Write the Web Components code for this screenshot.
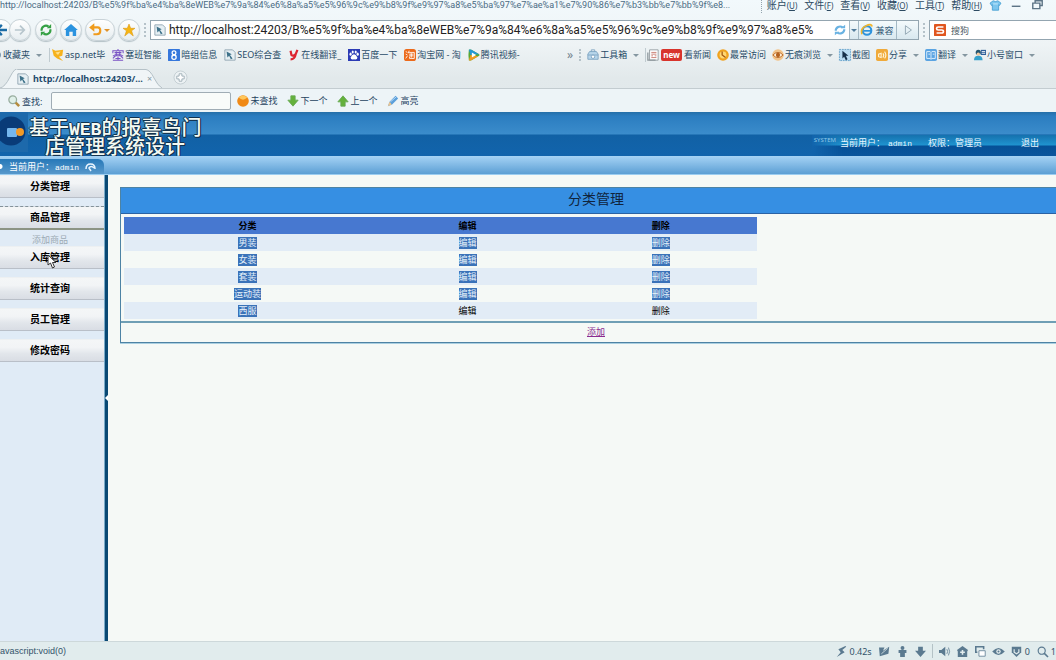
<!DOCTYPE html>
<html lang="zh-CN">
<head>
<meta charset="utf-8">
<title>分类管理</title>
<style>
html,body{margin:0;height:100%}
body{overflow:hidden;font-family:"Noto Sans","Noto Sans CJK SC",sans-serif;font-size:9px;color:#294c68;background:#f5f9f6}
</style>
</head>
<body>
<browser-window></browser-window>
<script>
const define = (name, html, setup) => customElements.define(name, class extends HTMLElement {
  connectedCallback() {
    if (this.shadowRoot) return;
    const t = document.createElement('template');
    t.innerHTML = html;
    this.attachShadow({mode: 'open'}).append(t.content.cloneNode(true));
    if (setup) setup(this, this.shadowRoot);
  }
});

const ICONS = {
  page: '<path d="M1 1h9l3 3v9H1z" fill="#e6eff3" stroke="#8ba1ad"/><path d="M3 3l6 3-2 1 3 4-2 1-2-4-2 2z" fill="#3d7189"/>',
  fav: '<circle cx="7" cy="7" r="5" fill="#e4edf3" stroke="#6d8ca5" stroke-width="1.4"/><path d="M7 4v4h3" fill="none" stroke="#6d8ca5"/>',
  asp: '<path d="M0 0l4 2 9-1-1 7-4 1 5 5-7-3-4-3z" fill="#f6b21d"/><path d="M4 4l6-1-3 4z" fill="#ffe08a"/>',
  sai: '<path d="M7 0v2M1 5V2h12v3M3 4h8M3 6h8M5 3v5M9 3v5M1 8h12M4 8l-3 3M10 8l3 3M7 9v4M4 11h6M1 13.200h12" fill="none" stroke="#7952c4" stroke-width="1.200"/>',
  eight: '<rect width="14" height="14" rx="1" fill="#3577dc"/><circle cx="7" cy="4.500" r="2.200" fill="none" stroke="#fff" stroke-width="1.500"/><circle cx="7" cy="9.500" r="2.500" fill="none" stroke="#fff" stroke-width="1.500"/>',
  yred: '<path d="M3 2l1 5q2 2 5-1l2-5M9 6q-1 6-6 6" fill="none" stroke="#dd2430" stroke-width="2.600"/>',
  paw: '<rect width="14" height="14" fill="#2b3bb5"/><g fill="#fff"><ellipse cx="3" cy="6" rx="1.300" ry="1.800"/><ellipse cx="5.500" cy="3.500" rx="1.200" ry="1.800"/><ellipse cx="9" cy="3.500" rx="1.200" ry="1.800"/><ellipse cx="11.300" cy="6" rx="1.300" ry="1.800"/><path d="M7 6q2 0 4 4 0 3-4 2-4 1-4-2 2-4 4-4z"/></g>',
  tao: '<rect width="14" height="14" rx="3" fill="#ec6a1b"/><path d="M2 3l2 1M2 6l2 1M2 11l2-3M6 2L5 5M6 4h6v7h-2M6 6h5M6 8h5M8.500 5v5M6.500 9v2h4" fill="none" stroke="#fff"/>',
  play: '<path d="M1 1q1-1 3 0l9 5q1 1 0 2l-9 5q-2 1-3 0-1-6 0-12z" fill="#58a832"/><path d="M1 1q1-1 3 0l9 5-10 1z" fill="#2498d4"/><path d="M12 8.500l-8 4.500q-2 1-3 0l2-6z" fill="#f19a20"/><path d="M4.500 4l5 3-5 3z" fill="#fff"/>',
  box: '<path d="M1 6l2-3h8l2 3v6H1z" fill="#b7d5ea" stroke="#7aa2c0"/><path d="M5 3V1h4v2M1 7h12" fill="none" stroke="#7aa2c0"/><circle cx="7" cy="9" r="2" fill="#fff" stroke="#7aa2c0"/>',
  news: '<path d="M3 1h10v12H3z" fill="#fff" stroke="#8d979c"/><path d="M1 4v9h9" fill="none" stroke="#8d979c" stroke-width="1.500"/><path d="M5 4h6M5 6h6M5 8h2M9 8h2M5 10h6" stroke="#c47467"/>',
  clock: '<circle cx="7" cy="7" r="6.800" fill="#f0a21f"/><circle cx="7" cy="7" r="4" fill="#ffd773"/><path d="M6 3v4l4 3" fill="none" stroke="#a65910" stroke-width="1.500"/>',
  eyeo: '<circle cx="7" cy="7" r="6.800" fill="#f2c389"/><path d="M1 7q6-6 12 0-6 6-12 0z" fill="#fff2dc" stroke="#b5611e"/><circle cx="7" cy="7" r="2.500" fill="#b5611e"/>',
  shot: '<rect x=".5" y=".5" width="13" height="13" fill="#b9dcf2" stroke="#5f9dc8" stroke-dasharray="2 1"/><path d="M4 2v9l2-2 2 4 2-1-2-4h3z" fill="#16304a"/>',
  share: '<rect width="14" height="14" rx="2" fill="#f0aa3a"/><path d="M3 6v3l3 1V5zM8 5q2 2 0 5M10 3q3 4 0 8" fill="none" stroke="#fff3d5" stroke-width="1.300"/>',
  book: '<rect width="14" height="14" rx="2" fill="#5ba4e2"/><path d="M2 3h4l1 1 1-1h4v8H8l-1 1-1-1H2zM7 4v8M4 6h2M9 6h2" fill="none" stroke="#eaf6ff"/>',
  duo: '<circle cx="5" cy="4" r="3" fill="#24566f"/><circle cx="5" cy="6" r="2" fill="#f2c9a0"/><path d="M0 13q0-5 5-5t5 5z" fill="#36a1cb"/><rect x="8" y="1" width="6" height="6" fill="#2d5e98"/><path d="M9 3h4M9 5h4" stroke="#fff"/>',
  find: '<circle cx="5.500" cy="5.500" r="4.500" fill="#dff0e9" stroke="#98ad9f" stroke-width="1.500"/><path d="M9 9l4 4" stroke="#b58b3c" stroke-width="3"/>',
  ball: '<circle cx="7" cy="7" r="6.800" fill="#f08a17"/><path d="M2 3q5 5 10 0Q7-2 2 3z" fill="#ffc75b"/>',
  down: '<path d="M4.500 1h5v5H13l-6 7-6-7h3.500z" fill="#64b13b" stroke="#67a852"/>',
  up: '<path d="M4.500 13h5V8H13L7 1 1 8h3.500z" fill="#64b13b" stroke="#67a852"/>',
  pen: '<path d="M1 13l2-5 7-7 3 3-7 7z" fill="#5b9fda"/><path d="M1 13l2-5 2.500 3z" fill="#f0c48a"/><path d="M4 8l7-6" stroke="#c1e1fa"/>',
  shirt: '<path d="M4 1q3 2 6 0l4 3-2 3-1-1v7H3V6L2 7 0 4z" fill="#7cc6ee" stroke="#3d99cf"/><path d="M4 5h6" stroke="#d5f0ff"/>',
  min: '<path d="M1 8h11" stroke="#5d7486" stroke-width="1.800"/>',
  restore: '<path d="M4 4V1h9v6h-3M1 4h9v7H1z" fill="none" stroke="#5d7486" stroke-width="1.800"/>',
  back: '<path d="M14 7H2M8 1L2 7l6 6" fill="none" stroke="#1b6ba5" stroke-width="2.800"/>',
  fwd: '<path d="M1 7h11M7 2l5 5-5 5" fill="none" stroke="#b8c6cd" stroke-width="2"/>',
  reload: '<path d="M2 8a5 5 0 0 1 8-5M12 6a5 5 0 0 1-8 5" fill="none" stroke="#35a044" stroke-width="2.500"/><path d="M8 5h5V0zM6 9H1v5z" fill="#35a044"/>',
  home: '<path d="M7 0l8 7h-2v7H9V9H5v5H1V7h-2z" fill="#2b93df"/>',
  undo: '<path d="M3 4h6q3 0 3 4t-4 4H4" fill="none" stroke="#f09b1c" stroke-width="2.500"/><path d="M5-1v10L-1 4z" fill="#f09b1c"/>',
  star: '<path d="M7 0l2 5h5l-4 3 2 6-5-4-5 4 2-6-4-3h5z" fill="#f6b512" stroke="#d8930e" stroke-width=".6"/>',
  refresh: '<path d="M2 8a5 5 0 0 1 8-4M12 6a5 5 0 0 1-8 4" fill="none" stroke="#69b2e2" stroke-width="2.500"/><path d="M8 5h5V1zM6 9H1v4z" fill="#69b2e2"/>',
  ie: '<circle cx="7" cy="7.500" r="5" fill="none" stroke="#2e93dc" stroke-width="2.500"/><path d="M3 8h9" stroke="#2e93dc" stroke-width="2"/><path d="M1 12Q-1 5 6 2q6-3 7 1" fill="none" stroke="#f0b52c" stroke-width="2"/>',
  run: '<path d="M4 2l7 5-7 5z" fill="none" stroke="#8ba0ad"/>',
  sogou: '<rect width="14" height="14" rx="1" fill="#e0561f"/><path d="M11 3.500H5q-2 0-2 1.700T5 7h4q2 0 2 1.800t-2 1.700H3" fill="none" stroke="#fff" stroke-width="2"/>',
  plus: '<circle cx="7" cy="7" r="7" fill="#edf2f4" stroke="#c3cdd2"/><path d="M5.500 3h3v2.500H11v3H8.500V11h-3V8.500H3v-3h2.500z" fill="#fff" stroke="#9eadb5"/>',
  bolt: '<path d="M12 0L3 4l3 4-5 6 10-6-3-3 5-4z" fill="#5b7a90"/>',
  leaf: '<path d="M0 2h7L5 6l8-5-1 9-11 3z" fill="#5b7a90"/><path d="M3 10l8-7" stroke="#dfeaeb"/>',
  man: '<circle cx="7" cy="2.500" r="2.500" fill="#5b7a90"/><path d="M2 5h10v4h-2v5H4V9H2z" fill="#5b7a90"/>',
  darr: '<path d="M4 1h6v5h4l-7 8-7-8h4z" fill="#5b7a90"/>',
  sound: '<path d="M0 5h3l5-4v12L3 9H0z" fill="#5b7a90"/><path d="M10 4q2 3 0 6M12 2q3 5 0 10" fill="none" stroke="#5b7a90"/>',
  house: '<path d="M7 0l7 5-1 2v7H1V7L0 5z" fill="#5b7a90"/><path d="M6 5h2v2h2v2H8v2H6V9H4V7h2z" fill="#e4edee"/>',
  wins: '<path d="M3 8H1V1h10v3" fill="none" stroke="#5b7a90" stroke-width="2"/><path d="M5 6h8v7H5z" fill="#fff" stroke="#5b7a90"/>',
  eye: '<path d="M-1 7q8-9 16 0-8 9-16 0z" fill="#5b7a90"/><circle cx="7" cy="7" r="2.800" fill="#e4edee"/><circle cx="7" cy="7" r="1.300" fill="#5b7a90"/>',
  shield: '<path d="M1 1h12v7l-6 6-6-6z" fill="#5b7a90"/><path d="M4 4v4l3 2 3-2V4" fill="none" stroke="#e4edee" stroke-width="1.500"/>',
  zoom: '<circle cx="6" cy="6" r="4.500" fill="none" stroke="#5b7a90" stroke-width="1.500"/><path d="M9 9l5 5" stroke="#5b7a90" stroke-width="2"/>'
};

define('ui-icon', `<style>:host{display:block;flex:none;width:12px;height:12px}svg{display:block;width:100%;height:100%;overflow:visible}</style><svg viewBox="0 0 14 14" aria-hidden="true"></svg>`,
  (el, root) => { root.querySelector('svg').innerHTML = ICONS[el.getAttribute('name')] || ''; });

define('tool-link', `<style>
:host{display:block;flex:none}
button{display:flex;align-items:center;gap:1px;height:16px;margin:0;padding:0;border:0;background:none;font:inherit;line-height:16px;color:inherit;white-space:nowrap}
.caret{display:none;margin-left:5px;border:3px solid transparent;border-top-color:#8496a0;border-bottom:0}
:host([menu]) .caret{display:block}
</style><button type="button"><ui-icon></ui-icon><slot name="badge"></slot><span><slot></slot></span><i class="caret"></i></button>`,
  (el, root) => {
    const icon = document.createElement('ui-icon');
    icon.setAttribute('name', el.getAttribute('icon'));
    root.querySelector('ui-icon').replaceWith(icon);
  });

define('round-button', `<style>
:host{display:block;flex:none}
button{display:flex;align-items:center;justify-content:center;gap:2px;width:22px;height:22px;padding:0;border:1px solid #c9d3d8;border-radius:11px;background:linear-gradient(#fff,#e6edf0);box-shadow:0 1px 1px #b3c0c6}
:host([wide]) button{width:30px}
.caret{display:none;border:3px solid transparent;border-top-color:#e0932a;border-bottom:0}
:host([wide]) .caret{display:block}
</style><button type="button"><slot></slot><i class="caret"></i></button>`,
  (el, root) => root.querySelector('button').setAttribute('aria-label', el.getAttribute('label')));

define('title-bar', `<style>
:host{display:flex;align-items:center;height:14px;margin-top:-2px;margin-bottom:-1px}
.title{white-space:nowrap;line-height:14px;font-family:Roboto,sans-serif;color:#4a6b83}
nav{display:flex;align-items:center;gap:7px;margin-left:auto;border-left:1px dotted #93a4ae;padding-left:5px;font-size:10px}
nav button{padding:0;border:0;background:none;font:inherit;line-height:14px;color:#2c4a62;white-space:nowrap}
nav small{font-size:8px}
.win{display:flex;gap:10px;padding:0 13px 0 8px}
.win ui-icon{width:11px;height:11px}
</style>
<span class="title">http://localhost:24203/B%e5%9f%ba%e4%ba%8eWEB%e7%9a%84%e6%8a%a5%e5%96%9c%e9%b8%9f%e9%97%a8%e5%ba%97%e7%ae%a1%e7%90%86%e7%b3%bb%e7%bb%9f%e8...</span>
<nav><button>账户<small>(<u>U</u>)</small></button><button>文件<small>(<u>F</u>)</small></button><button>查看<small>(<u>V</u>)</small></button><button>收藏<small>(<u>O</u>)</small></button><button>工具<small>(<u>T</u>)</small></button><button>帮助<small>(<u>H</u>)</small></button></nav>
<div class="win"><ui-icon name="shirt"></ui-icon><ui-icon name="min"></ui-icon><ui-icon name="restore"></ui-icon></div>`);

define('address-bar', `<style>
:host{display:flex;align-items:center;gap:4px;box-sizing:border-box;height:34px;padding-top:4px}
.nav{display:flex;align-items:center;gap:3px;margin-left:-10px}
.pair{display:flex;margin-right:1px}
.pair round-button+round-button{margin-left:-3px}
.url{flex:1 1 auto;min-width:0}
.field{display:flex;align-items:center;box-sizing:border-box;height:20px;border:1px solid #93a5b0;background:#fff}
input{flex:1;min-width:0;padding:0;border:0;outline:0;background:none;font:inherit;color:#222}
.url input{font-size:12px;font-family:Roboto,sans-serif}
.url>ui-icon{margin:0 3px}
.drop,.mode,.go{display:flex;align-items:center;justify-content:center;height:18px;padding:0;border:0;border-left:1px solid #a3b9c5;background:linear-gradient(#f4fafc,#d9e8ef);color:#345a77;font:inherit}
.drop{width:9px}.drop i{border:3px solid transparent;border-top-color:#527c9b;border-bottom:0}
.mode{width:38px;gap:2px}.go{width:22px}
.search{flex:0 0 127px;min-width:0;padding-left:4px;gap:5px;border-right:0}
.search input{color:#4c5a64}
.dots{height:14px;border-left:2px dotted #b5c2c9}
</style>
<div class="nav"><div class="pair"><round-button label="后退"><ui-icon name="back"></ui-icon></round-button><round-button label="前进"><ui-icon name="fwd"></ui-icon></round-button></div>
<round-button label="刷新"><ui-icon name="reload"></ui-icon></round-button><round-button label="主页"><ui-icon name="home"></ui-icon></round-button><round-button label="恢复" wide><ui-icon name="undo"></ui-icon></round-button><round-button label="收藏"><ui-icon name="star"></ui-icon></round-button></div>
<i class="dots"></i>
<div class="field url"><ui-icon name="page"></ui-icon><input aria-label="地址" value="http://localhost:24203/B%e5%9f%ba%e4%ba%8eWEB%e7%9a%84%e6%8a%a5%e5%96%9c%e9%b8%9f%e9%97%a8%e5%"><ui-icon name="refresh"></ui-icon><button class="drop" aria-label="历史"><i></i></button><button class="mode"><ui-icon name="ie"></ui-icon>兼容</button><button class="go" aria-label="转到"><ui-icon name="run"></ui-icon></button></div>
<i class="dots"></i>
<div class="field search"><ui-icon name="sogou"></ui-icon><input aria-label="搜索" value="搜狗"></div>`);

define('bookmark-bar', `<style>
:host{display:flex;align-items:center;justify-content:space-between;height:20px;padding-right:21px}
div{display:flex;align-items:center;gap:6px}
.left{gap:7px;margin-left:-10px}
.sep{height:14px;border-left:1px solid #c0cbd0;margin-right:-5px}
.more{font-size:12px;line-height:16px;color:#71828d}
.dots{height:12px;border-left:2px dotted #b5c2c9}
.new{padding:0 2px;border-radius:2px;background:#d8342c;color:#fff;font-weight:bold;font-size:8px;line-height:12px;margin:0 1px}
</style>
<div class="left"><tool-link icon="fav" menu>收藏夹</tool-link><i class="sep"></i>
<tool-link icon="asp">asp.net毕</tool-link><tool-link icon="sai">塞班智能</tool-link><tool-link icon="eight">暗组信息</tool-link><tool-link icon="page">SEO综合查</tool-link><tool-link icon="yred">在线翻译_</tool-link><tool-link icon="paw">百度一下</tool-link><tool-link icon="tao">淘宝网 - 淘</tool-link><tool-link icon="play">腾讯视频-</tool-link></div>
<div><span class="more">»</span><i class="dots"></i>
<tool-link icon="box" menu>工具箱</tool-link><i class="sep"></i><tool-link icon="news"><span slot="badge" class="new">new</span>看新闻</tool-link><tool-link icon="clock">最常访问</tool-link><tool-link icon="eyeo" menu>无痕浏览</tool-link><tool-link icon="shot">截图</tool-link><tool-link icon="share" menu>分享</tool-link><tool-link icon="book" menu>翻译</tool-link><tool-link icon="duo" menu>小号窗口</tool-link></div>`);

define('tab-strip', `<style>
:host{display:flex;align-items:flex-end;gap:12px;height:23px;border-bottom:1px solid #c3ccd0}
.tab{position:relative;display:flex;align-items:center;gap:4px;height:19px;padding:0 8px 0 17px;width:137px;color:#1e4a6c}
.tab svg{position:absolute;inset:0;width:100%;height:100%}
.tab>:not(svg){position:relative}
b{font-size:9px;line-height:19px;white-space:nowrap}
button{padding:0;border:0;background:none;font:inherit;color:#8798a3}
.plus{padding-bottom:4px}
.plus ui-icon{width:13px;height:13px}
</style>
<div class="tab"><svg viewBox="0 0 162 19" preserveAspectRatio="none" aria-hidden="true"><path d="M0 19Q5 18 10 8T18 .5H146Q150 1 154 9T162 19" fill="#f0f5f7" stroke="#b5c1c7"/></svg><ui-icon name="page"></ui-icon><b>http://localhost:24203/...</b><button aria-label="关闭">×</button></div>
<button class="plus" aria-label="新标签"><ui-icon name="plus"></ui-icon></button>`);

define('find-bar', `<style>
:host{display:flex;align-items:center;gap:10px;box-sizing:border-box;height:23px;padding:1px 0 0 8px;background:#edf4f7;color:#1d425f}
label{display:flex;align-items:center;gap:2px;margin-right:-1px}
input{box-sizing:border-box;width:180px;height:18px;border:1px solid #a0adb5;border-radius:2px;background:#f9fcfa}
.gap{margin-left:-4px}
</style>
<label for="q"><ui-icon name="find"></ui-icon>查找:</label><input id="q"><tool-link class="gap" icon="ball">未查找</tool-link><tool-link icon="down">下一个</tool-link><tool-link icon="up">上一个</tool-link><tool-link icon="pen">高亮</tool-link>`);

define('app-header', `<style>
:host{display:flex;justify-content:space-between;height:44px;background:linear-gradient(#256fa8 0,#2b7dc0 4px,#3b8ccb 22px,#1161a5 23px,#1264ac 100%);color:#eaf7ff;overflow:hidden}
.brand{display:flex;align-items:center}
svg{width:28px;height:44px}
h1{margin:0;font-size:20px;line-height:19px;font-weight:500;color:#f4faf3;text-shadow:1px 0 #12324e,-1px 0 #12324e,0 1px #12324e,0 -1px #12324e,1px 1px #12324e;padding:5px 0 0 1px}
h1 span{display:block;height:19px}h1 span+span{padding-left:16px}
h1 em{font-style:normal;font-weight:bold;font-size:18px;line-height:16px;font-family:"Liberation Mono",monospace}
.info{display:flex;align-items:center;align-self:flex-end;box-sizing:border-box;height:21px;padding:0 17px 6px 2px;background:linear-gradient(90deg,#1264ac 0,transparent 30px),linear-gradient(#1571ae 0,#1f93cf 10px,#055097 11px,#0a559c 100%)}
small{font-size:6px;align-self:flex-start;color:#8ec7e8;line-height:10px;margin-right:4px}
.role{margin-left:16px}a{margin-left:39px;color:inherit;text-decoration:none}
code{font-size:8px;font-family:"Liberation Mono",monospace;margin-left:3px}
.info span{white-space:nowrap}
</style>
<div class="brand"><svg viewBox="0 0 28 44" aria-hidden="true"><path d="M0 0h28v40H0z" fill="#1d69ab"/><circle cx="11" cy="19" r="14.500" fill="#093b78"/><rect x="7" y="16" width="10" height="9" rx="1" fill="#75b6ed"/><circle cx="20" cy="20" r="4" fill="#f39a26"/></svg>
<h1><span>基于<em>WEB</em>的报喜鸟门</span><span>店管理系统设计</span></h1></div>
<div class="info"><small>SYSTEM</small><span>当前用户：<code>admin</code></span><span class="role">权限：管理员</span><a href="#">退出</a></div>`);

define('user-band', `<style>
:host{display:flow-root;height:19px;background:linear-gradient(#a6d3f5,#5c9fd4);border-bottom:1px solid #9bcdf0;box-sizing:border-box}
div{display:flex;align-items:center;box-sizing:border-box;width:104px;height:15px;margin-top:3px;padding-left:9px;border-radius:0 6px 0 0;background:radial-gradient(circle at 0 50%,#fff 2px,transparent 3px),linear-gradient(#2678b8,#5798cb);color:#fff;line-height:15px}
code{font-size:8px;font-family:"Liberation Mono",monospace;margin-left:1px}
svg{width:11px;height:10px;margin-left:6px}
</style><div><span>当前用户：<code>admin</code></span><svg viewBox="0 0 11 10" aria-hidden="true"><path d="M1 7q0-5 4.500-5T10 7M6 9l-2-3q2-3 5 0" fill="none" stroke="#e9f5ff" stroke-width="1.500"/></svg></div>`);

define('menu-item', `<style>
:host{display:block;margin-bottom:8px}
:host([active]){margin-bottom:0}
button{display:block;box-sizing:border-box;width:100%;height:23px;padding:0 4px 3px 0;border:0;border-bottom:1px solid #b9bfc8;border-top:1px solid #edf0f2;background:linear-gradient(#f4f6f7 0,#f2f4f6 35%,#e2e6eb 65%,#d9dde4 100%);font:bold 10px "Noto Sans CJK SC",sans-serif;line-height:17px;color:#000}
:host([active]) button{height:24px;border-top:1px dashed #83929a;border-bottom:2px solid #8c9484}
</style><button type="button"><slot></slot></button>`);

define('side-menu', `<style>
:host{display:block;flex:none;box-sizing:border-box;width:108px;background:#e0ebf6;border-right:3px solid #0a4974;box-shadow:inset -1px 0 #7aabc9;padding-right:1px;position:relative}
a{display:block;height:16px;padding-right:4px;text-align:center;font-size:9px;line-height:20px;color:#9caab4;text-decoration:none}
.cursor{position:absolute;left:47px;top:79px;width:10px;height:15px}
.grip{position:absolute;right:-3px;top:220px;border:3px solid transparent;border-right-color:#fff;border-left:0}
</style><menu-item>分类管理</menu-item><menu-item active>商品管理</menu-item><a href="#">添加商品</a><menu-item>入库管理</menu-item><menu-item>统计查询</menu-item><menu-item>员工管理</menu-item><menu-item>修改密码</menu-item>
<svg class="cursor" viewBox="0 0 10 15" aria-hidden="true"><path d="M1 1v10l2.500-2 2 5 2-1-2-4.500h3.500z" fill="#fff" stroke="#333"/></svg><i class="grip"></i>`);

define('category-panel', `<style>
:host{display:block;margin:12px -16px 0 12px;border:1px solid #4d83a4;box-shadow:0 1px #a9cfe0}
h2{margin:0;height:26px;box-sizing:border-box;border-bottom:1px solid #2a62a4;background:#368fe3;font-weight:400;font-size:14px;line-height:22px;text-align:center;color:#10243c}
table{width:calc(200% / 3);margin:3px 3px 2px;border-collapse:collapse;table-layout:fixed;text-align:center;color:#000}
th,td{height:17px;padding:0;line-height:16px;font-size:9px}
th{background:#4778d0}
th:first-child{width:39%}
tr:nth-child(odd) td{background:#e2ecf6}
mark{display:inline-block;height:12px;line-height:12px;vertical-align:middle;background:#3a72b8;color:#e6f1fb}
footer{height:19px;border-top:2px solid #6f9fb5;text-align:center;line-height:18px}
footer a{color:#8a2b90}
</style><h2>分类管理</h2><table><thead><tr><th>分类</th><th>编辑</th><th>删除</th></tr></thead><tbody></tbody></table><footer><a href="#">添加</a></footer>`,
  (el, root) => {
    root.querySelector('tbody').innerHTML = [['男装',1],['女装',1],['套装',1],['运动装',1],['西服',0]]
      .map(([n, sel]) => `<tr><td><mark>${n}</mark></td>` + ['编辑', '删除'].map(t => `<td>${sel ? `<mark>${t}</mark>` : t}</td>`).join('') + '</tr>').join('');
  });

define('status-bar', `<style>
:host{display:flex;align-items:center;flex:none;gap:7px;height:18px;border-top:1px solid #cdd8da;background:#e1eced;color:#33536a;overflow:hidden}
.msg{margin-right:auto;font-family:"Liberation Sans",sans-serif}
.i{display:flex;align-items:center;gap:3px}
ui-icon{width:11px;height:11px}
.sep{height:14px;border-left:1px solid #b4c2c6;margin:0 -1px}
</style><span class="msg">avascript:void(0)</span><span class="i"><ui-icon name="bolt"></ui-icon>0.42s</span><ui-icon name="leaf"></ui-icon><ui-icon name="man"></ui-icon><ui-icon name="darr"></ui-icon><i class="sep"></i><ui-icon name="sound"></ui-icon><ui-icon name="house"></ui-icon><ui-icon name="wins"></ui-icon><ui-icon name="eye"></ui-icon><span class="i"><ui-icon name="shield"></ui-icon>0</span><span class="i"><ui-icon name="zoom"></ui-icon>1</span>`);

define('browser-window', `<style>
:host{display:flex;flex-direction:column;height:100vh;overflow:hidden}
.chrome{flex:none;display:flow-root;background:linear-gradient(#f2f9fc,#eef3f5 40%,#e2e9eb 70%,#e0e7ea)}
.page{flex:1;min-height:0;display:flex;background:#f5f9f6}
main{flex:1;min-width:0;overflow:hidden}
app-header,user-band{flex:none}
</style>
<div class="chrome"><title-bar></title-bar><address-bar></address-bar><bookmark-bar></bookmark-bar><tab-strip></tab-strip><find-bar></find-bar></div>
<app-header></app-header><user-band></user-band>
<div class="page"><side-menu></side-menu><main><category-panel></category-panel></main></div>
<status-bar></status-bar>`);
</script>
</body>
</html>
